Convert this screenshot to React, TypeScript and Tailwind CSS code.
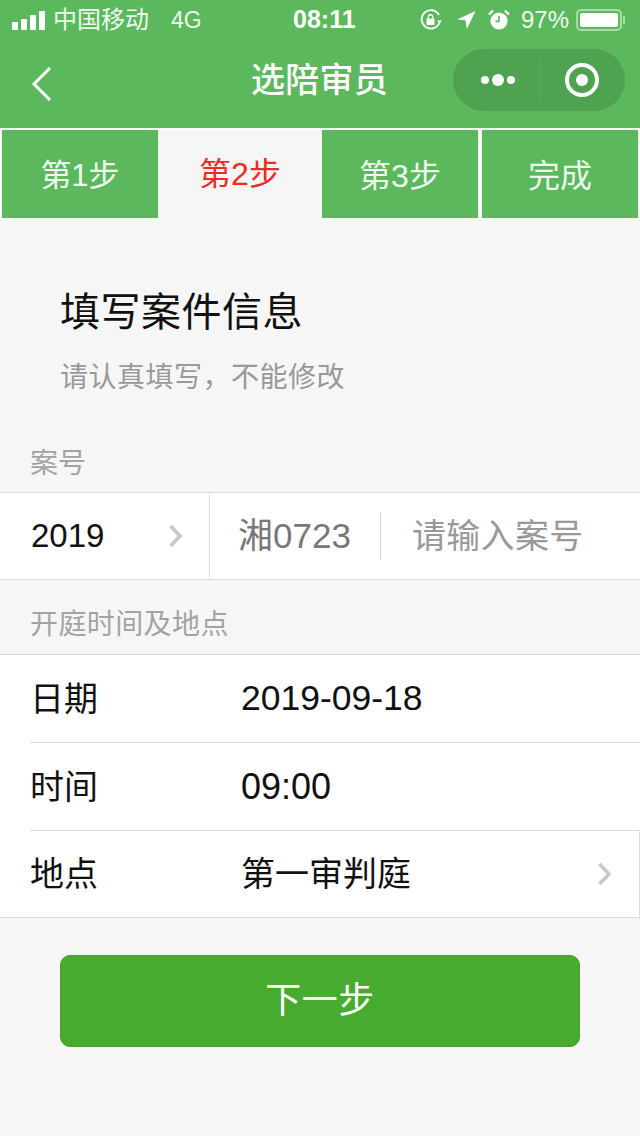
function SignalBars() {
  return (
    <div className="flex items-end gap-[3px] h-[20px]">
      <div className="w-[6px] h-[8px] bg-white rounded-[1px]" />
      <div className="w-[6px] h-[11px] bg-white rounded-[1px]" />
      <div className="w-[6px] h-[15px] bg-white rounded-[1px]" />
      <div className="w-[6px] h-[19px] bg-white rounded-[1px]" />
    </div>
  );
}

function RotationLock() {
  return (
    <svg width="24" height="24" viewBox="0 0 24 24" fill="none" stroke="white" strokeWidth="1.8">
      <path d="M20.5 14.5A9.2 9.2 0 1 1 20 7" />
      <path d="M23 12.5h-5l2.5 3z" fill="white" stroke="none" />
      <rect x="7.5" y="10.5" width="8" height="6.5" rx="1" fill="white" stroke="none" />
      <path d="M9.3 10.5V9a2.3 2.3 0 0 1 4.6 0v1.5" strokeWidth="1.4" />
    </svg>
  );
}

function LocationArrow() {
  return (
    <svg width="20" height="20" viewBox="0 0 20 20">
      <path d="M19.5 1 1 9.5l8.6.8 1.2 9z" fill="white" />
    </svg>
  );
}

function AlarmClock() {
  return (
    <svg width="22" height="22" viewBox="0 0 22 22">
      <circle cx="11" cy="12" r="8.6" fill="white" />
      <path d="M11 7v5.4H7.4" fill="none" stroke="#5cb85c" strokeWidth="1.6" />
      <path d="M1 5.5 5 1.6M21 5.5 17 1.6" stroke="white" strokeWidth="2.4" />
    </svg>
  );
}

function Chevron() {
  return (
    <svg width="15" height="24" viewBox="0 0 15 24" fill="none" stroke="#c7c7cc" strokeWidth="3.6">
      <path d="M2.5 2 12 12 2.5 22" />
    </svg>
  );
}

function Row({ label, children, inset, arrow, height }: { label: string; children: React.ReactNode; inset?: boolean; arrow?: boolean; height: string }) {
  return (
    <div className={`${height} flex items-center relative`}>
      <div className="w-[241px] pl-[30px] text-[34px] text-[#111]">{label}</div>
      <div className="flex-1 text-[#111]">{children}</div>
      {arrow && <div className="mr-[27px] flex"><Chevron /></div>}
      {inset && <div className="absolute left-[30px] right-0 bottom-0 h-px bg-[#dcdcdc]" />}
    </div>
  );
}

export default function App() {
  return (
    <div className="w-[640px] h-[1136px] overflow-hidden bg-[#f6f6f6] font-['Liberation_Sans','Noto_Sans_CJK_SC',sans-serif]">
      {/* Header */}
      <div className="h-[128px] bg-[#5cb85c] text-white">
        <div className="h-[40px] flex items-center pl-[12px] pr-[15px] text-[24px] text-[#eef8ee]">
          <SignalBars />
          <span className="ml-[8px] w-[118px]">中国移动</span>
          <span className="text-[23px] w-[122px]">4G</span>
          <span className="text-[25px] font-bold text-white">08:11</span>
          <div className="ml-auto flex items-center">
            <RotationLock />
            <div className="ml-[13px]"><LocationArrow /></div>
            <div className="ml-[12px]"><AlarmClock /></div>
            <span className="ml-[11px] text-[24px]">97%</span>
            <div className="ml-[7px] flex items-center">
              <div className="w-[46px] h-[22px] rounded-[5px] border-2 border-[#a9dba9] p-[2px]">
                <div className="w-[38px] h-[14px] rounded-[2px] bg-white" />
              </div>
              <div className="ml-[1px] w-[2px] h-[8px] bg-[#a9dba9]" />
            </div>
          </div>
        </div>
        <div className="h-[88px] grid grid-cols-[1fr_auto_1fr] items-center">
          <div className="pl-[27px]">
            <svg width="28" height="38" viewBox="0 0 28 38" fill="none" stroke="white" strokeWidth="3">
              <path d="M23 3 7 19l16 16" />
            </svg>
          </div>
          <div className="text-[34px] font-medium pb-[8px] pr-[1px] tracking-[0.3px]">选陪审员</div>
          <div className="flex justify-end pr-[15px] pb-[9px]">
            <div className="w-[172px] h-[62px] rounded-full bg-[#4fa350] flex items-center">
              <div className="w-[86px] pl-[4px] flex items-center justify-center gap-[3px]">
                <div className="w-[8px] h-[8px] rounded-full bg-white" />
                <div className="w-[12px] h-[12px] rounded-full bg-white" />
                <div className="w-[8px] h-[8px] rounded-full bg-white" />
              </div>
              <div className="w-px h-[40px] bg-[#5cb05d]" />
              <div className="flex-1 flex items-center justify-center pr-[2px]">
                <div className="w-[34px] h-[34px] rounded-full border-4 border-white flex items-center justify-center">
                  <div className="w-[12px] h-[12px] rounded-full bg-white" />
                </div>
              </div>
            </div>
          </div>
        </div>
      </div>

      {/* Steps */}
      <div className="flex h-[90px] bg-white pt-[2px] pl-[2px] text-[#eef8ee]">
        <div className="w-[156px] bg-[#5cb85c] flex items-center justify-center pt-[4px] text-[31px]">第1步</div>
        <div className="w-[164px] bg-[#f6f6f6] flex items-center justify-center text-[#ee2a24] text-[32px]">第2步</div>
        <div className="w-[156px] bg-[#5cb85c] flex items-center justify-center pt-[4px] text-[32px]">第3步</div>
        <div className="w-[156px] ml-[4px] bg-[#5cb85c] flex items-center justify-center pt-[4px] text-[32px]">完成</div>
      </div>

      {/* Title */}
      <div className="pl-[60px] mt-[70px]">
        <h1 className="text-[40px] leading-[48px] text-[#111] tracking-[0.5px]">填写案件信息</h1>
        <p className="mt-[22px] text-[28px] leading-[40px] text-[#999] tracking-[0.5px]">请认真填写，不能修改</p>
      </div>

      {/* Case number */}
      <div className="pl-[30px] pt-[46px] pb-[8px] text-[28px] leading-[40px] text-[#a3a3a3]">案号</div>
      <div className="h-[88px] bg-white border-y border-[#dcdcdc] flex items-center">
        <div className="w-[210px] h-full border-r border-[#dcdcdc] flex items-center justify-between pl-[31px] pr-[26px]">
          <span className="text-[33px] text-[#111]">2019</span>
          <Chevron />
        </div>
        <div className="w-[171px] h-[48px] pl-[28px] border-r border-[#d4d4d4] flex items-center text-[35px] text-[#777]">
          湘0723
        </div>
        <div className="pl-[31px] text-[34px] text-[#999] tracking-[0.3px]">请输入案号</div>
      </div>

      {/* Hearing */}
      <div className="pl-[30px] pt-[25px] pb-[9px] text-[28px] leading-[40px] text-[#a3a3a3] tracking-[0.4px]">开庭时间及地点</div>
      <div className="bg-white border-t border-b border-[#dcdcdc]">
        <Row label="日期" height="h-[88px]" inset><span className="text-[35.5px]">2019-09-18</span></Row>
        <Row label="时间" height="h-[88px]" inset><span className="text-[36px]">09:00</span></Row>
        <div className="border-r border-[#dcdcdc]">
          <Row label="地点" height="h-[86px]" arrow><span className="text-[34px]">第一审判庭</span></Row>
        </div>
      </div>

      {/* Next */}
      <div className="px-[60px] mt-[37px]">
        <button className="w-full h-[92px] rounded-[10px] bg-[#46ab2e] border border-[#4a9a35] text-white text-[36px] tracking-[0.5px]">
          下一步
        </button>
      </div>
    </div>
  );
}
